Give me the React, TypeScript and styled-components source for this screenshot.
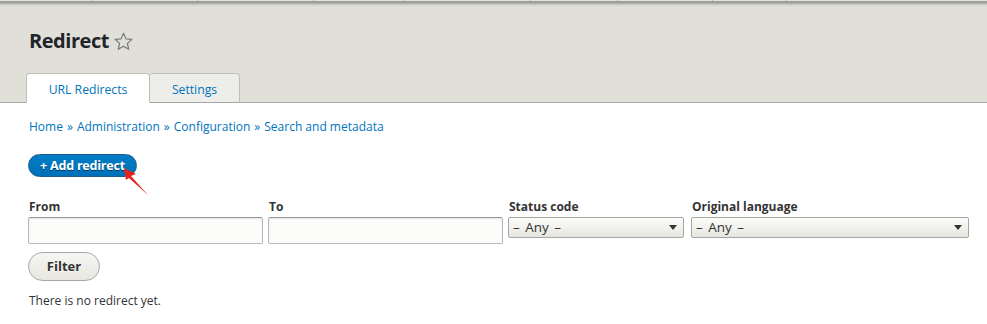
import React from "react";
import styled, { createGlobalStyle } from "styled-components";

const Global = createGlobalStyle`
  html, body { margin: 0; padding: 0; background: #ffffff; }
  body { font-family: "Open Sans", "DejaVu Sans", sans-serif; color: #333333; font-size: 12px; }
  * { box-sizing: border-box; }
`;

const Page = styled.div`
  width: 987px;
  height: 324px;
  overflow: hidden;
  background: #fff;
`;

const Toolbar = styled.div`
  display: flex;
  height: 1px;
  background: #e4e4e0;
`;

const ToolbarCell = styled.div<{ $w: number }>`
  width: ${(p) => p.$w}px;
  height: 1px;
  border-right: 1px solid #b9b9b5;
`;

const Header = styled.header`
  background: linear-gradient(to bottom, #9a9a96 0px, #a3a39f 2px, #d6d6ce 4px, #e0e0d8 6px, #e0e0d8 100%);
  border-bottom: 1px solid #a6a6a6;
  height: 102px;
  padding: 0 28px 0 26px;
  display: flex;
  flex-direction: column;
  justify-content: space-between;
`;

const TitleRow = styled.div`
  display: flex;
  align-items: center;
  gap: 5px;
  padding: 26px 0 0 3px;
`;

const Title = styled.h1`
  margin: 0;
  font-family: "Open Sans", sans-serif;
  font-size: 20px;
  line-height: 28px;
  font-weight: 700;
  color: #232429;
  letter-spacing: -0.45px;
`;

const Star = styled.svg`
  width: 19px;
  height: 19px;
`;

const Tabs = styled.ul`
  display: flex;
  list-style: none;
  margin: 0 0 -1px 0;
  padding: 0;
`;

const Tab = styled.li<{ $active?: boolean }>`
  height: 30px;
  width: ${(p) => (p.$active ? 124 : 90)}px;
  display: flex;
  align-items: center;
  justify-content: center;
  background: ${(p) => (p.$active ? "#ffffff" : "#ededea")};
  border: 1px solid #bfbfba;
  border-bottom: ${(p) => (p.$active ? "1px solid #ffffff" : "1px solid #a6a6a6")};
  border-left: ${(p) => (p.$active ? "1px solid #bfbfba" : "none")};
  border-radius: 4px 4px 0 0;
  color: #0074bd;
  font-size: 12.2px;
  padding-top: 2px;
`;

const Content = styled.main`
  padding: 15px 18px 0 28px;
  position: relative;
`;

const Breadcrumb = styled.nav`
  display: flex;
  gap: 4px;
  font-size: 12px;
  line-height: 18px;
  color: #0074bd;
  padding-left: 1px;
`;

const Crumb = styled.a`
  color: #0074bd;
  text-decoration: none;
`;

const Sep = styled.span`
  color: #0074bd;
`;

const ActionRow = styled.div`
  margin-top: 18px;
  position: relative;
  height: 23px;
`;

const PrimaryButton = styled.a`
  display: inline-flex;
  align-items: center;
  height: 23px;
  width: 109px;
  justify-content: center;
  padding: 0 0 1px 0;
  border-radius: 20em;
  background: linear-gradient(to bottom, #007bc6, #0071b8);
  border: 1px solid #1e5c90;
  color: #fff;
  font-weight: 700;
  font-size: 12.5px;
  text-decoration: none;
  text-shadow: 0 1px rgba(0, 0, 0, 0.5);
  letter-spacing: -0.2px;
`;

const Arrow = styled.svg`
  position: absolute;
  left: 0;
  top: 0;
  overflow: visible;
  pointer-events: none;
`;

const FilterRow = styled.div`
  display: flex;
  margin-top: 21px;
`;

const Field = styled.div<{ $w: number; $gap: number }>`
  width: ${(p) => p.$w}px;
  margin-right: ${(p) => p.$gap}px;
  flex-shrink: 0;
  display: flex;
  flex-direction: column;
`;

const Label = styled.label`
  font-weight: 700;
  font-size: 12px;
  line-height: 18px;
  color: #333;
  padding-left: 1px;
  margin-bottom: 1px;
`;

const TextInput = styled.input`
  height: 27px;
  width: 100%;
  border: 1px solid #b8b8b8;
  border-top-color: #999;
  border-radius: 2px;
  background: #fcfcfa;
  box-shadow: inset 0 1px 2px rgba(0, 0, 0, 0.1);
  font-family: inherit;
`;

const SelectBox = styled.div`
  height: 21px;
  width: 100%;
  border: 1px solid #a6a6a6;
  border-radius: 2px;
  background: linear-gradient(to bottom, #fcfcfa, #e6e6e0);
  display: flex;
  align-items: center;
  justify-content: space-between;
  padding: 0 6px 1px 4px;
  font-size: 13.5px;
  word-spacing: 2px;
  color: #333;
`;

const Caret = styled.span`
  width: 0;
  height: 0;
  border-left: 4px solid transparent;
  border-right: 4px solid transparent;
  border-top: 5px solid #333;
  margin-top: 1px;
`;

const FilterButton = styled.button`
  margin-top: 8px;
  height: 29px;
  width: 72px;
  border-radius: 20em;
  border: 1px solid #a6a6a6;
  background: linear-gradient(to bottom, #f6f6f3, #e7e7df);
  color: #333;
  font-family: inherit;
  font-weight: 700;
  font-size: 13px;
  text-shadow: 0 1px rgba(255, 255, 255, 0.6);
  padding: 0 0 1px 0;
`;

const Empty = styled.p`
  margin: 11px 0 0 1px;
  font-size: 12px;
  line-height: 18px;
  color: #333;
`;

const crumbs = ["Home", "Administration", "Configuration", "Search and metadata"];
const toolbarCells = [93, 105, 116, 90, 127, 87, 95, 74];
const fields: { label: string; w: number; gap: number; kind: "text" | "select" }[] = [
  { label: "From", w: 235, gap: 5, kind: "text" },
  { label: "To", w: 235, gap: 5, kind: "text" },
  { label: "Status code", w: 176, gap: 7, kind: "select" },
  { label: "Original language", w: 278, gap: 0, kind: "select" },
];

export default function App() {
  return (
    <Page>
      <Global />
      <Toolbar>
        {toolbarCells.map((w, i) => (
          <ToolbarCell key={i} $w={w} />
        ))}
      </Toolbar>
      <Header>
        <TitleRow>
          <Title>Redirect</Title>
          <Star viewBox="1.5 1.8 21 20">
            <path
              d="M12 2.8l2.7 6.1 6.6.6-5 4.4 1.5 6.5L12 17l-5.8 3.4 1.5-6.5-5-4.4 6.6-.6z"
              fill="none"
              stroke="#777"
              strokeWidth="1.3"
              strokeLinejoin="round"
            />
          </Star>
        </TitleRow>
        <Tabs>
          <Tab $active>URL Redirects</Tab>
          <Tab>Settings</Tab>
        </Tabs>
      </Header>
      <Content>
        <Breadcrumb>
          {crumbs.map((c, i) => (
            <React.Fragment key={c}>
              {i > 0 && <Sep>»</Sep>}
              <Crumb href="#">{c}</Crumb>
            </React.Fragment>
          ))}
        </Breadcrumb>
        <ActionRow>
          <PrimaryButton href="#">+ Add redirect</PrimaryButton>
          <Arrow width="1" height="1">
            <polygon points="96,14 108,20 103,22 120,41 101,24 98,26" fill="#e9231c" />
          </Arrow>
        </ActionRow>
        <FilterRow>
          {fields.map((f) => (
            <Field key={f.label} $w={f.w} $gap={f.gap}>
              <Label>{f.label}</Label>
              {f.kind === "text" ? (
                <TextInput />
              ) : (
                <SelectBox>
                  <span>– Any –</span>
                  <Caret />
                </SelectBox>
              )}
            </Field>
          ))}
        </FilterRow>
        <FilterButton>Filter</FilterButton>
        <Empty>There is no redirect yet.</Empty>
      </Content>
    </Page>
  );
}
